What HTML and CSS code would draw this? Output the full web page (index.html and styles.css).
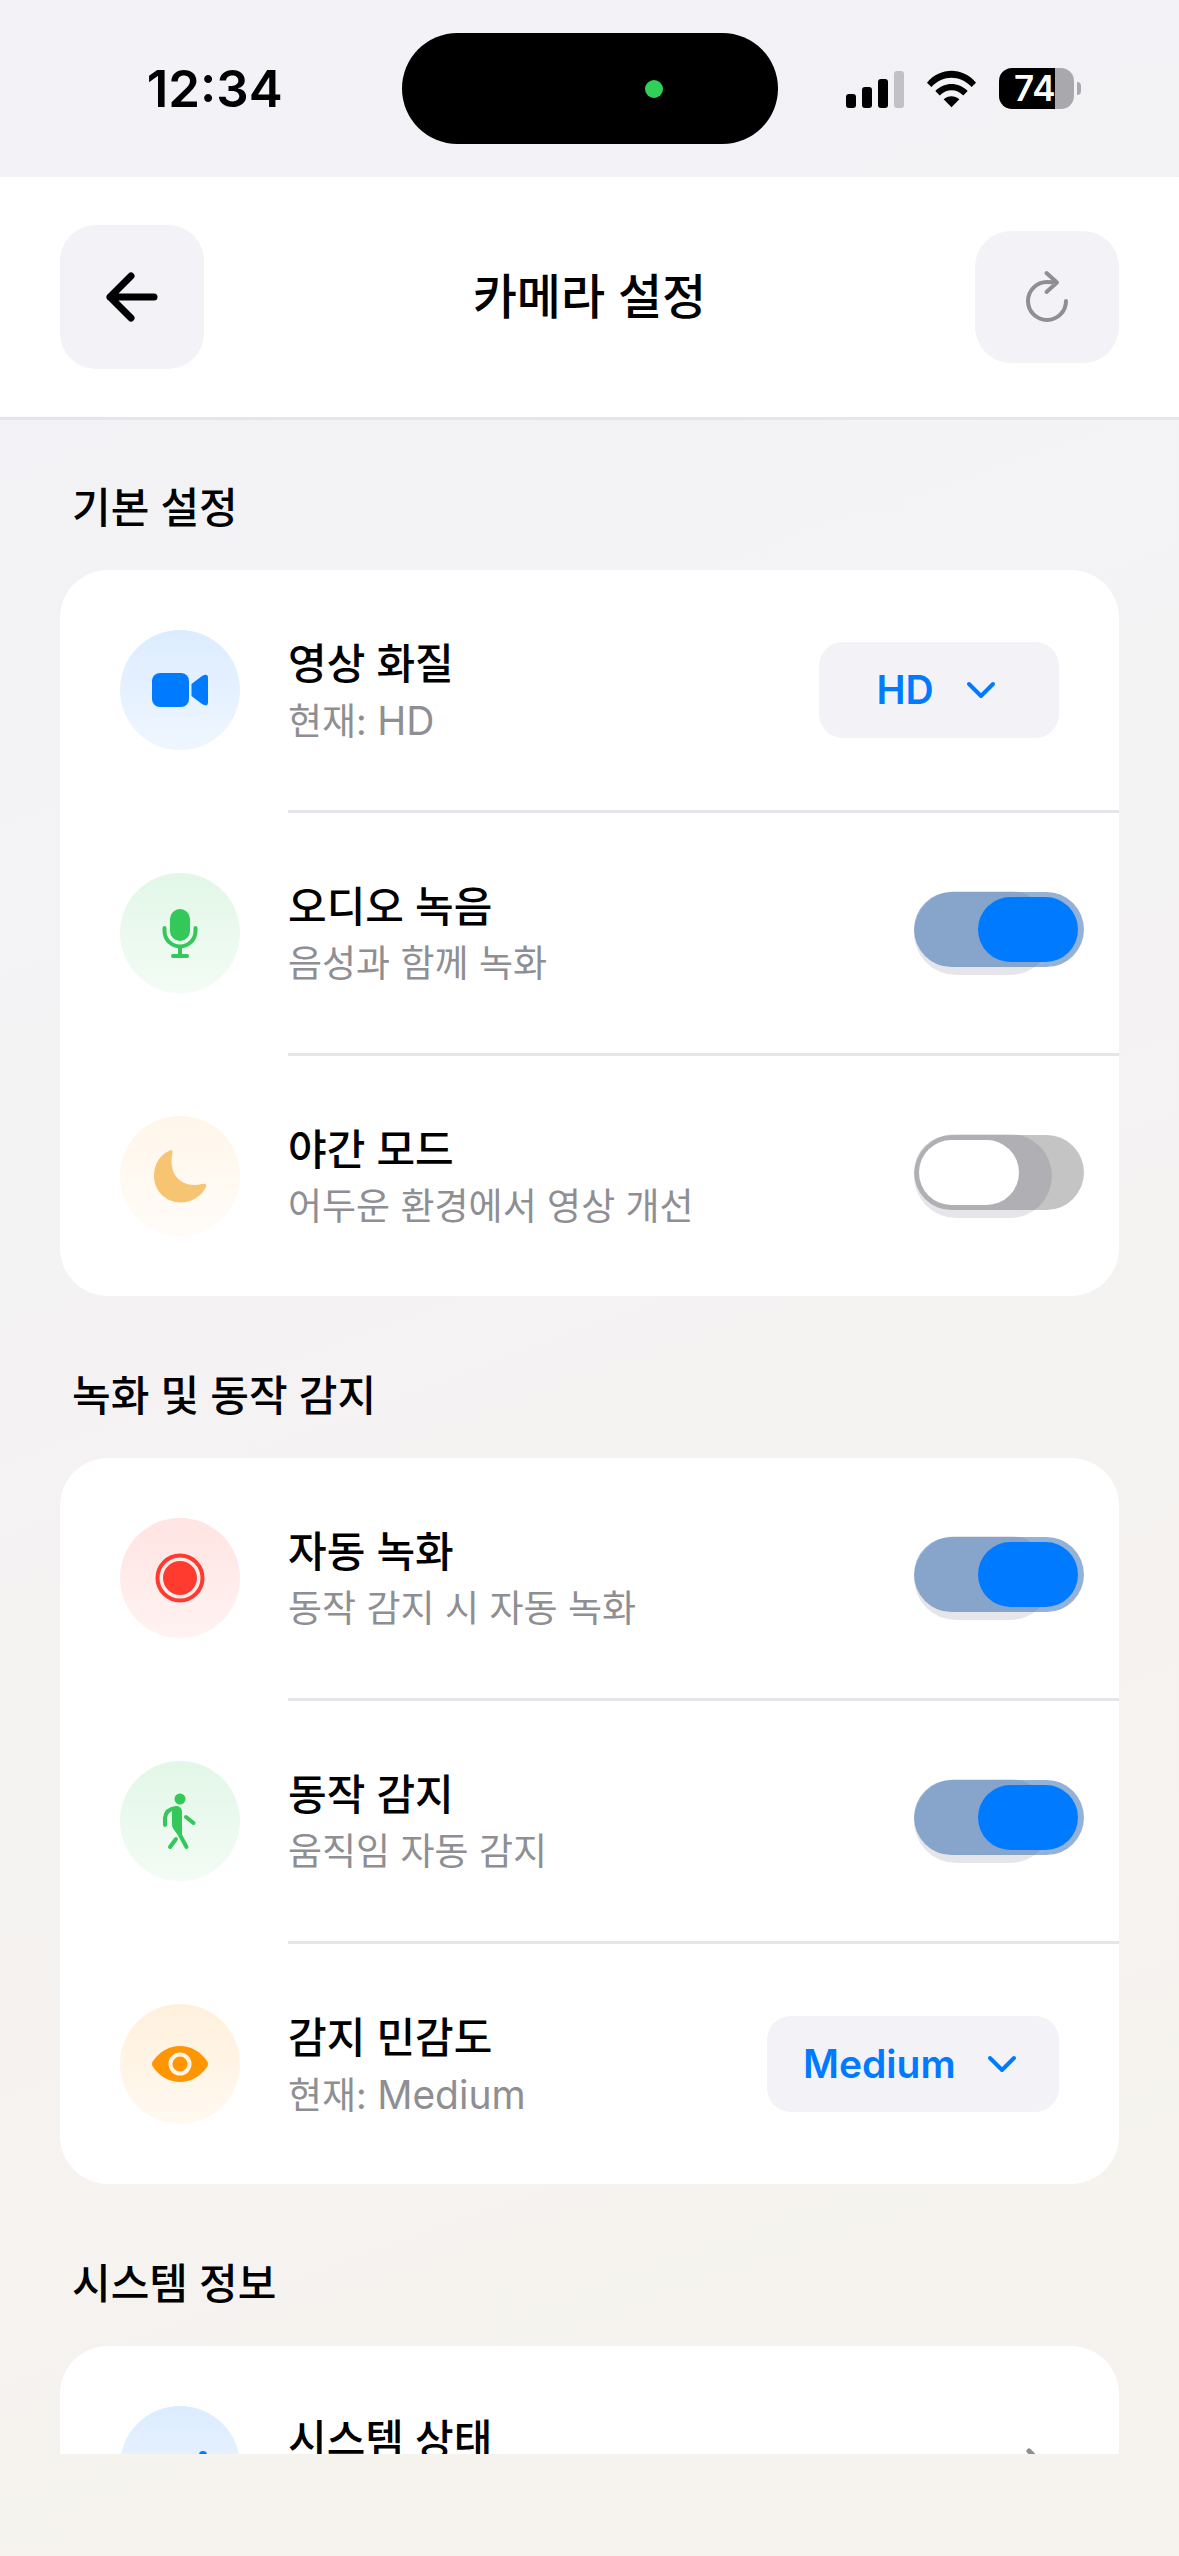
FILE: index.html
```html
<!DOCTYPE html>
<html lang="ko">
<head>
<meta charset="utf-8">
<meta name="viewport" content="width=device-width, initial-scale=1">
<title>카메라 설정</title>
<link rel="stylesheet" href="styles.css">
</head>
<body>
<div class="statusbar">
  <span class="time">12:34</span>
  <div class="island"><span class="camera-dot"></span></div>
  <div class="indicators">
    <svg class="signal" viewBox="0 0 58 38" aria-hidden="true">
      <rect x="0" y="24" width="10" height="14" rx="3"/>
      <rect x="16" y="17" width="10" height="21" rx="3"/>
      <rect x="32" y="9" width="10" height="29" rx="3"/>
      <rect x="48" y="1" width="10" height="37" rx="3" opacity=".2"/>
    </svg>
    <svg class="wifi" viewBox="0 0 52 38" aria-hidden="true">
      <path d="M1 12.500C15-3.500 37-3.500 51 12.500L46.500 17C34.500 4.500 17.500 4.500 5.500 17Z"/>
      <path d="M9.500 21C19 11.500 33 11.500 42.500 21L38 25.500C31 18.500 21 18.500 14 25.500Z"/>
      <path d="M18 29.500C22.500 25.500 29.500 25.500 34 29.500L26 37.500Z"/>
    </svg>
    <div class="battery"><span class="level">74</span></div>
  </div>
</div>

<header class="navbar">
  <button class="nav-button back" type="button" aria-label="뒤로">
    <svg viewBox="0 0 54 54" width="54" height="54" fill="none" stroke="#000" stroke-width="7" stroke-linecap="round" stroke-linejoin="round"><path d="M26 6L5 27L26 48M5 27H49"/></svg>
  </button>
  <h1>카메라 설정</h1>
  <button class="nav-button refresh" type="button" aria-label="새로고침">
    <svg viewBox="0 0 46 54" width="46" height="54" fill="none" stroke="#8e8e93" stroke-width="4" stroke-linecap="round" stroke-linejoin="round"><path d="M22.500 3L33 12.500L22.500 22M33 12.500Q28 12 23 12A19 19 0 1 0 42 31"/></svg>
  </button>
</header>

<main>
  <section>
    <h2>기본 설정</h2>
    <div class="card">
      <div class="row">
        <span class="icon blue"><svg viewBox="0 0 120 120"><rect x="32" y="43" width="37" height="34" rx="8"/><path d="M71.500 54L82 46Q88 42.500 88 48V72Q88 77.500 82 74L71.500 66Z"/></svg></span>
        <div class="text"><h3 id="quality">영상 화질</h3><p>현재: <span class="latin">HD</span></p></div>
        <label class="picker"><select aria-labelledby="quality"><option>HD</option><option>SD</option></select>
          <svg viewBox="0 0 30 18" aria-hidden="true"><path d="M3 3L15 15L27 3"/></svg></label>
      </div>
      <div class="row">
        <span class="icon green"><svg viewBox="0 0 120 120"><rect x="50" y="36" width="20" height="32" rx="10"/><path class="line" d="M44.500 55V58A15.500 15.500 0 0 0 75.500 58V55M60 74V83M53 83H67"/></svg></span>
        <div class="text"><h3 id="audio">오디오 녹음</h3><p>음성과 함께 녹화</p></div>
        <span class="toggle"><input type="checkbox" role="switch" aria-labelledby="audio" checked></span>
      </div>
      <div class="row">
        <span class="icon amber"><svg viewBox="0 0 120 120"><path d="M50 34.500Q53 33 52.500 37C48 56 59 73 82 68Q87 67 86 71C81 81 71 86.500 61 86.500C46 86.500 34 75 34 60C34 48 40 38.500 50 34.500Z"/></svg></span>
        <div class="text"><h3 id="night">야간 모드</h3><p>어두운 환경에서 영상 개선</p></div>
        <span class="toggle"><input type="checkbox" role="switch" aria-labelledby="night"></span>
      </div>
    </div>
  </section>

  <section>
    <h2>녹화 및 동작 감지</h2>
    <div class="card">
      <div class="row">
        <span class="icon red"><svg viewBox="0 0 120 120"><circle cx="60" cy="60" r="17"/><circle class="line" cx="60" cy="60" r="22.500"/></svg></span>
        <div class="text"><h3 id="autorec">자동 녹화</h3><p>동작 감지 시 자동 녹화</p></div>
        <span class="toggle"><input type="checkbox" role="switch" aria-labelledby="autorec" checked></span>
      </div>
      <div class="row">
        <span class="icon green"><svg viewBox="0 0 120 120"><circle cx="60" cy="38" r="5.500"/><path d="M52 53Q52 45 57 45Q62 46 62 51V73L60 75Q52 68 52 64Z"/><path class="line" d="M56 47Q46 48 45 57V64M66 56L73.500 62M55 66L60 74L66.500 86M56 78L50 86"/></svg></span>
        <div class="text"><h3 id="motion">동작 감지</h3><p>움직임 자동 감지</p></div>
        <span class="toggle"><input type="checkbox" role="switch" aria-labelledby="motion" checked></span>
      </div>
      <div class="row">
        <span class="icon orange"><svg viewBox="0 0 120 120"><path d="M33 57C47 37 73 37 87 57Q89 60 87 63C73 83 47 83 33 63Q31 60 33 57Z"/><circle class="hole" cx="60" cy="60" r="9.500"/></svg></span>
        <div class="text"><h3 id="sense">감지 민감도</h3><p>현재: <span class="latin">Medium</span></p></div>
        <label class="picker"><select aria-labelledby="sense"><option>Medium</option><option>Low</option><option>High</option></select>
          <svg viewBox="0 0 30 18" aria-hidden="true"><path d="M3 3L15 15L27 3"/></svg></label>
      </div>
    </div>
  </section>

  <section>
    <h2>시스템 정보</h2>
    <div class="card">
      <a class="row" href="#status">
        <span class="icon blue"><svg viewBox="0 0 120 120"><path class="line" d="M37 70L54 50L65 66L81 52"/><circle cx="83" cy="49" r="4"/></svg></span>
        <div class="text"><h3>시스템 상태</h3><p>정상 작동 중</p></div>
        <svg class="disclosure" viewBox="0 0 24 36" aria-hidden="true"><path d="M3 3L18 18L3 33"/></svg>
      </a>
    </div>
  </section>
</main>
<footer class="safe-area"></footer>
</body>
</html>
```
FILE: styles.css
```css
* { box-sizing: border-box; }

body {
  margin: 0;
  height: 100vh;
  display: flex;
  flex-direction: column;
  background: linear-gradient(160deg, #f2f2f7 5%, #f6f3ee 90%);
  color: #000;
  font-family: Inter, "Noto Sans CJK KR", sans-serif;
}

h1, h2, h3, p { margin: 0; }

/* Status bar */
.statusbar {
  flex: none;
  display: grid;
  grid-template-columns: 1fr 376px 1fr;
  align-items: center;
  height: 177px;
}
.time {
  padding-left: 28px;
  text-align: center;
  font-size: 51px;
  font-weight: 600;
  line-height: 60px;
}
.island {
  display: flex;
  align-items: center;
  justify-content: flex-end;
  height: 111px;
  padding-right: 115px;
  border-radius: 56px;
  background: #000;
}
.camera-dot {
  width: 18px;
  height: 18px;
  border-radius: 50%;
  background: #30d158;
}
.indicators {
  display: flex;
  align-items: center;
  justify-content: flex-end;
  gap: 22px;
  padding-right: 105px;
}
.signal { width: 58px; height: 38px; }
.wifi { width: 51px; height: 38px; }
.battery {
  position: relative;
  width: 75px;
  height: 41px;
  border-radius: 13px;
  background: linear-gradient(to right, #000 56px, #a9a8ac 56px);
}
.battery::after {
  content: "";
  position: absolute;
  left: 78px;
  top: 14px;
  width: 4px;
  height: 13px;
  border-radius: 0 4px 4px 0;
  background: #a9a8ac;
}
.level {
  display: block;
  padding-left: 15px;
  color: #fff;
  font-size: 35px;
  font-weight: 600;
  line-height: 41px;
}

/* Navigation bar */
.navbar {
  flex: none;
  display: flex;
  align-items: center;
  justify-content: space-between;
  height: 243px;
  padding: 0 60px;
  background: #fff;
  border-bottom: 3px solid #e5e5ea;
}
.navbar h1 { font-size: 48px; font-weight: 500; line-height: 60px; }
.nav-button {
  display: grid;
  place-items: center;
  width: 144px;
  height: 144px;
  padding: 0;
  border: 0;
  border-radius: 36px;
  background: #f2f2f7;
}
.refresh { height: 132px; }

/* Settings list */
main {
  flex: 1;
  min-height: 0;
  overflow: hidden;
  padding: 0 60px;
}
h2 {
  padding: 58px 12px 32px;
  font-size: 42px;
  font-weight: 500;
  line-height: 60px;
}
section + section h2 { padding-top: 70px; }
.card { border-radius: 48px; background: #fff; }
.row {
  position: relative;
  display: flex;
  align-items: center;
  gap: 48px;
  height: 240px;
  padding: 0 60px;
  color: inherit;
  text-decoration: none;
}
.row + .row { margin-top: 3px; }
.row + .row::before {
  content: "";
  position: absolute;
  top: -3px;
  left: 228px;
  right: 0;
  height: 3px;
  background: #e5e5ea;
}
.text { flex: 1; padding-top: 2px; }
h3 { font-size: 42px; font-weight: 500; line-height: 60px; }
.text p { color: #8e8e93; font-size: 37px; line-height: 54px; }
.latin { font-size: 39px; }

.icon { width: 120px; height: 120px; border-radius: 50%; }
.icon svg { display: block; fill: currentColor; }
.icon .line {
  fill: none;
  stroke: currentColor;
  stroke-width: 4;
  stroke-linecap: round;
  stroke-linejoin: round;
}
.icon .hole { stroke: #fff4e6; stroke-width: 4; }
.blue { color: #007aff; background: linear-gradient(#dcecff, #eff6ff); }
.green { color: #34c759; background: linear-gradient(#e2f7e7, #f3fcf5); }
.amber { color: #f7c572; background: linear-gradient(#fff6ea, #fffcf8); }
.red { color: #ff3b30; background: linear-gradient(#ffe4e2, #fff3f2); }
.orange { color: #ff9500; background: linear-gradient(#fff0dc, #fff9f1); }

.picker {
  display: flex;
  align-items: center;
  justify-content: center;
  gap: 31px;
  min-width: 240px;
  height: 96px;
  padding: 0 42px 0 36px;
  border-radius: 24px;
  background: #f2f2f7;
}
.picker select {
  appearance: none;
  padding: 0;
  border: 0;
  background: none;
  color: #007aff;
  font: 600 39px/48px Inter, sans-serif;
}
.picker svg {
  width: 30px;
  height: 18px;
  fill: none;
  stroke: #007aff;
  stroke-width: 4;
  stroke-linecap: round;
  stroke-linejoin: round;
}

/* Switch: a grey base with the wider translucent track over it */
.toggle {
  position: relative;
  width: 170px;
  height: 84px;
  margin-right: -25px;
}
.toggle::before {
  content: "";
  position: absolute;
  left: 0;
  top: 0;
  width: 138px;
  height: 84px;
  border-radius: 42px;
  background: #e5e5ea;
}
.toggle input {
  appearance: none;
  position: relative;
  display: block;
  width: 170px;
  height: 75px;
  margin: 1px 0 0;
  padding: 5px;
  border-radius: 38px;
  background: rgba(0, 0, 0, .23);
}
.toggle input::before {
  content: "";
  display: block;
  width: 100px;
  height: 65px;
  border-radius: 33px;
  background: #fff;
}
.toggle input:checked { background: rgba(41, 102, 172, .5); }
.toggle input:checked::before { margin-left: 59px; background: #007aff; }

.disclosure {
  width: 24px;
  height: 36px;
  margin-right: 9px;
  fill: none;
  stroke: #8e8e93;
  stroke-width: 5;
  stroke-linecap: round;
  stroke-linejoin: round;
}

.safe-area { flex: none; height: 102px; }
```
